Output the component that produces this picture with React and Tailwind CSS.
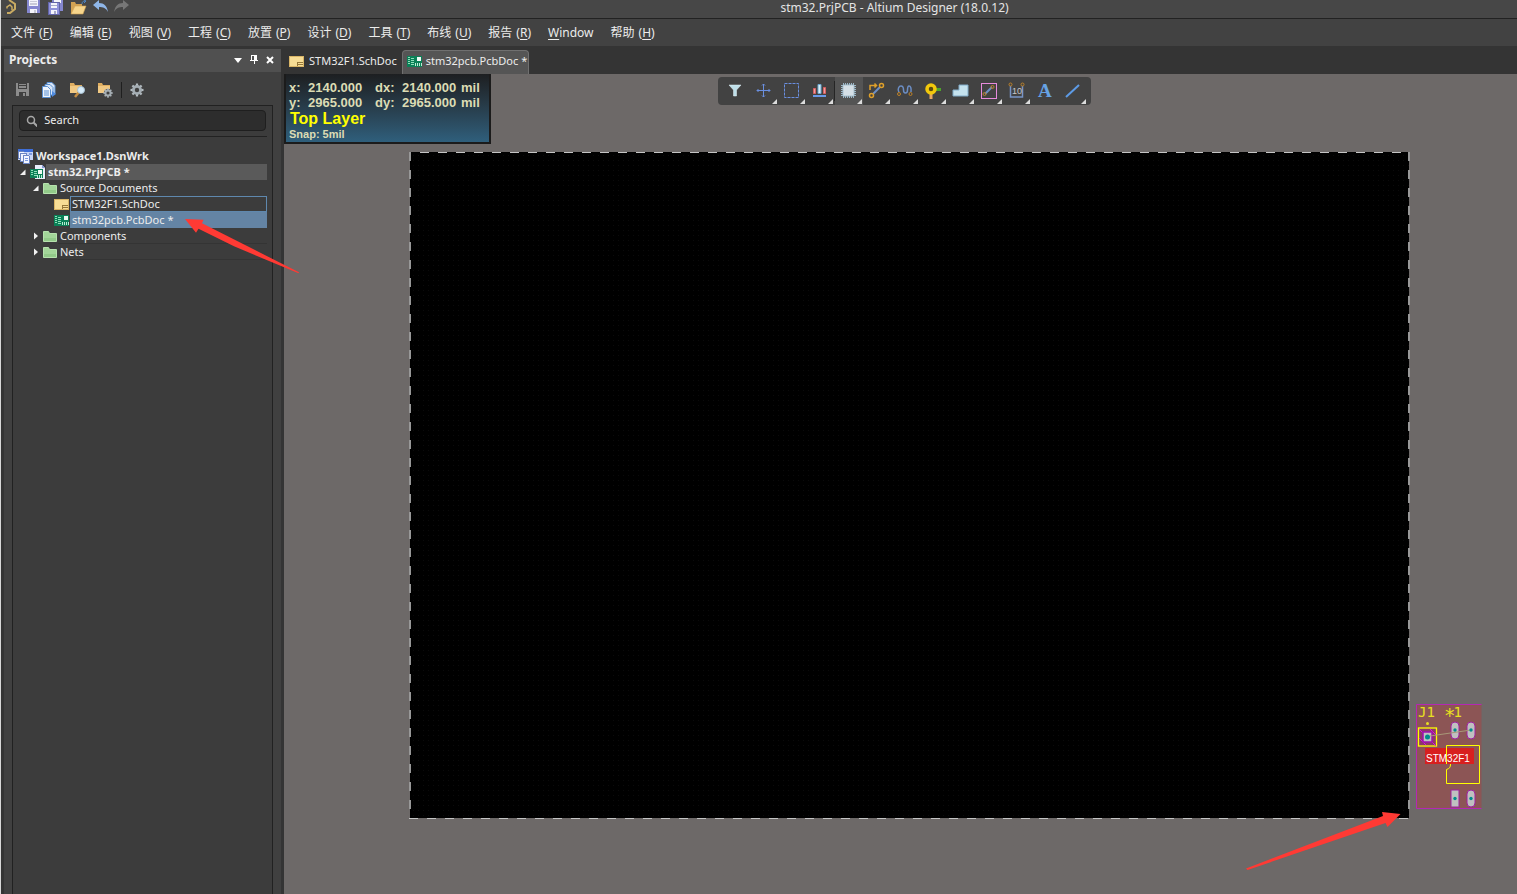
import React from "react";

function SaveIcon({ dim }) {
  const c = dim ? "#8c8c8c" : "#8587cf";
  const p = dim ? "#3f3f3f" : "#f4f4fb";
  return (
    <svg width="13" height="13" viewBox="0 0 13 13" shapeRendering="crispEdges">
      <path d="M0 0h13v13H0z" fill={c} />
      <path d="M2 0h9v6H2z" fill={p} />
      <path d="M3 9h7v4H3z" fill={p} />
      <path d="M3 1h7v1H3zM3 3h7v2H3zM7 10h2v3H7z" fill={dim ? c : "#c9cad8"} />
    </svg>
  );
}

function SaveAllIcon() {
  return (
    <svg width="15" height="15" viewBox="0 0 15 15" shapeRendering="crispEdges">
      <path d="M4 0h11v11H4z" fill="#8587cf" />
      <path d="M6 0h7v3H6z" fill="#f4f4fb" />
      <path d="M0 2h12v13H0z" fill="#6264a8" />
      <path d="M1 3h10v11H1z" fill="#8f91da" />
      <path d="M3 3h6v5H3zM3 10h6v4H3z" fill="#f4f4fb" />
      <path d="M3 5h6v1H3zM6 11h2v3H6z" fill="#a5a7c8" />
    </svg>
  );
}

function OpenIcon() {
  return (
    <svg width="17" height="15" viewBox="0 0 17 15">
      <path d="M1 14V2h4l1 2h6v3" fill="#d2a253" />
      <path d="M1 14 5 6h11l-3 8z" fill="#f6d58c" stroke="#d2a253" strokeWidth=".6" />
      <path d="M12 4c0-2 1-3 3-3m-1-1 2 1-2 2" stroke="#4d86c6" fill="none" />
    </svg>
  );
}

function AltiumLogo() {
  return (
    <svg width="11" height="15" viewBox="0 0 11 15" fill="none" stroke="#c9ab62" strokeWidth="2">
      <path d="M3 0 9 4v5l-5 4H1" />
      <path d="M1 8.500V7l3-2 2 2v3" strokeWidth="1.500" />
    </svg>
  );
}

function UndoIcon({ color, flip }) {
  return (
    <svg width="15" height="12" viewBox="0 0 15 12" className={flip ? "-scale-x-100" : ""}>
      <path d="M0 5 6 0v3c5 0 8 3 9 9-2-4-5-5-9-5v3z" fill={color} />
    </svg>
  );
}

function SchIcon() {
  return (
    <svg width="15" height="11" viewBox="0 0 15 11" shapeRendering="crispEdges" className="shrink-0">
      <path d="M0 0h15v11H0z" fill="#d9b566" />
      <path d="M1 1h13v9H1z" fill="#f7dd95" />
      <path d="M8 6h6v1H8zM9 8h5v1H9zM8 6h1v4H8z" fill="#96783a" />
    </svg>
  );
}

function PcbIcon() {
  return (
    <svg width="15" height="11" viewBox="0 0 15 11" shapeRendering="crispEdges" className="shrink-0">
      <path d="M0 0h15v11H0z" fill="#0b8057" />
      <path d="M1 1h2v1H1zM1 3h2v1H1zM1 5h2v1H1zM1 7h2v1H1zM4 2h3v1H4zM4 4h3v1H4zM4 6h3v1H4zM4 8h3v1H4z" fill="#8fe0bb" />
      <path d="M10 1h4v4h-4z" fill="#eefaf4" />
      <path d="M8 7h1v3H8zM10 7h1v3h-1zM12 7h1v3h-1zM14 7h1v3h-1z" fill="#b9edd4" />
    </svg>
  );
}

function ProjectIcon() {
  return (
    <svg width="15" height="14" viewBox="0 0 15 14" shapeRendering="crispEdges" className="shrink-0">
      <path d="M5 0h7l3 3v11H5z" fill="#e9eefb" />
      <path d="M12 0v3h3z" fill="#8a9bd0" />
      <path d="M0 4h13v9H0z" fill="#0b8057" />
      <path d="M1 5h2v1H1zM1 7h2v1H1zM1 9h2v1H1zM4 6h3v1H4zM4 8h3v1H4zM4 10h3v1H4z" fill="#8fe0bb" />
      <path d="M8 5h4v4H8z" fill="#eefaf4" />
      <path d="M7 10h1v3H7zM9 10h1v3H9zM11 10h1v3h-1z" fill="#b9edd4" />
    </svg>
  );
}

function WorkspaceIcon() {
  return (
    <svg width="15" height="15" viewBox="0 0 15 15" shapeRendering="crispEdges" className="shrink-0">
      <path d="M0 0h15v11H0z" fill="#c7d5f6" />
      <path d="M0 0h15v3H0z" fill="#3f6fd8" />
      <path d="M0 2h6v8H0z" fill="#6d86c4" />
      <path d="M1 3h5v6H1z" fill="#f3f6ff" />
      <path d="M2 4h7v9H2z" fill="#6d86c4" />
      <path d="M3 5h5v7H3z" fill="#f3f6ff" />
      <path d="M5 6h5l2 2v7H5z" fill="#6d86c4" />
      <path d="M6 7h4l1 1v6H6z" fill="#f3f6ff" />
      <path d="M7 9h3v1H7zM7 11h3v1H7z" fill="#7e9be0" />
      <path d="M11 4h3v2h-3z" fill="#7e9be0" />
    </svg>
  );
}

function FolderIcon() {
  return (
    <svg width="14" height="11" viewBox="0 0 14 11" className="shrink-0">
      <path d="M.5 10.500V.5h5l1 2h7v8z" fill="#a3d699" stroke="#b7e2ae" />
      <path d="M1 10h12V7H1z" fill="#92ca89" />
    </svg>
  );
}

function PanelFolder({ children }) {
  return (
    <svg width="17" height="16" viewBox="0 0 17 16">
      <path d="M1 11V1h4l1 2h7v8z" fill="#dfae61" />
      <path d="M1 11V4h12v7z" fill="#f1c983" />
      {children}
    </svg>
  );
}

const gearTeeth = [0, 45, 90, 135, 180, 225, 270, 315];

function Gear({ cx, cy, r }) {
  return (
    <g>
      {gearTeeth.map((a) => (
        <rect key={a} x={cx - r * 0.22} y={cy - r * 1.3} width={r * 0.44} height={r * 0.6} fill="#b4bcc1" transform={`rotate(${a} ${cx} ${cy})`} />
      ))}
      <circle cx={cx} cy={cy} r={r * 0.72} fill="none" stroke="#a4adb3" strokeWidth={r * 0.56} />
    </g>
  );
}

const menus = [
  ["文件", "F"], ["编辑", "E"], ["视图", "V"], ["工程", "C"], ["放置", "P"], ["设计", "D"],
  ["工具", "T"], ["布线", "U"], ["报告", "R"], ["Window", ""], ["帮助", "H"],
];

function TitleBar() {
  return (
    <header className="grid h-[19px] grid-cols-[1fr_auto_1fr] items-center overflow-hidden border-b border-[#222] bg-[#474747]">
      <div className="flex h-4 items-start gap-[7px] self-start pl-[5px]">
        <button aria-label="Altium" className="mr-[3px]"><AltiumLogo /></button>
        <button aria-label="Save"><SaveIcon /></button>
        <button aria-label="Save all" className="ml-px"><SaveAllIcon /></button>
        <button aria-label="Open" className="-mr-px"><OpenIcon /></button>
        <button aria-label="Undo" className="-mr-px"><UndoIcon color="#8fb6e8" /></button>
        <button aria-label="Redo"><UndoIcon color="#777" flip /></button>
      </div>
      <h1 className="pb-1 pl-[271px] text-xs leading-4 text-[#e4e4e4]">stm32.PrjPCB - Altium Designer (18.0.12)</h1>
      <span />
    </header>
  );
}

function MenuBar() {
  return (
    <nav className="flex h-[27px] items-center gap-[17px] bg-[#424242] pl-[10px] text-xs text-[#ececec]">
      {menus.map(([name, key]) => (
        <button key={name} className="flex gap-1 whitespace-nowrap">
          {key ? <><span>{name}</span><span>(<u className="underline-offset-2">{key}</u>)</span></> : <span><u className="underline-offset-2">W</u>indow</span>}
        </button>
      ))}
    </nav>
  );
}

function Caret({ open }) {
  return (
    <svg width="6" height="8" viewBox="0 0 6 8" className="shrink-0">
      <path d={open ? "M5.500 1.500v5.500H0z" : "M1 .5 5 4 1 7.500z"} fill="#f2f2f2" />
    </svg>
  );
}

function TreeRow({ indent, caret, icon, bold, line, label, tone }) {
  return (
    <li className={`flex h-4 items-center ${indent}`}>
      {caret && <button aria-label={`Toggle ${label}`} className="mr-1 shrink-0"><Caret open={caret === "open"} /></button>}
      {icon}
      <span className={`ml-px h-4 flex-1 whitespace-nowrap pl-[2px] leading-[15px] ${bold ? "font-bold" : ""} ${line ? "border-b border-[#343434]" : ""} ${tone || ""}`}>{label}</span>
    </li>
  );
}

function Sidebar() {
  return (
    <aside className="flex w-[277px] shrink-0 flex-col bg-[#404040] text-[11px] text-[#ececec]">
      <div className="flex h-[23px] items-center bg-[#505050] pb-px pl-[5px] pr-[7px]">
        <h2 className="flex-1 text-xs font-bold">Projects</h2>
        <div className="flex items-center gap-2">
          <button aria-label="Panel menu"><svg width="8" height="8"><path d="M0 2h8L4 7z" fill="#fff" /></svg></button>
          <button aria-label="Pin"><svg width="8" height="10" shapeRendering="crispEdges"><path d="M1 0h6v5h1v1H4.500v3h-1V6H0V5h1zM2 1v4h2V1z" fill="#fff" fillRule="evenodd" /></svg></button>
          <button aria-label="Close"><svg width="8" height="8"><path d="m1 1 6 6M7 1 1 7" stroke="#fff" strokeWidth="2" /></svg></button>
        </div>
      </div>
      <div className="flex h-[33px] items-center gap-3 pl-3 pt-[2px]">
        <button aria-label="Save document"><SaveIcon dim /></button>
        <button aria-label="Copy documents" className="ml-px">
          <svg width="14" height="16" viewBox="0 0 14 16">
            <path d="M5 .5h5l3 3V12H5z" fill="#d8e6f8" stroke="#5a8fd0" />
            <path d="M3 2.500h5l3 3V13H3z" fill="#d8e6f8" stroke="#5a8fd0" />
            <path d="M.5 4.500h5l3 3v8h-8z" fill="#edf4fd" stroke="#5a8fd0" />
            <path d="M2 9h5M2 11h5M2 13h5" stroke="#5a8fd0" />
            <path d="m10 9 4 3-4 3z" fill="#4e8be0" />
          </svg>
        </button>
        <button aria-label="Find in project" className="ml-px">
          <PanelFolder><path d="m10 10-4 5" stroke="#c38c41" strokeWidth="2.500" /><circle cx="12" cy="8" r="3.500" fill="#d7ecfa" stroke="#a6bfd0" /></PanelFolder>
        </button>
        <button aria-label="Project options" className="-ml-px">
          <PanelFolder><circle cx="11" cy="11" r="4" fill="#404040" /><Gear cx={11} cy={11} r={3.6} /></PanelFolder>
        </button>
        <span className="-ml-[5px] -mr-1 h-4 w-px bg-[#1f1f1f]" />
        <button aria-label="Settings"><svg width="14" height="14"><Gear cx={7} cy={7} r={5} /></svg></button>
      </div>
      <div className="mx-2 flex-1 border border-b-0 border-[#212121] bg-[#3c3c3c] px-[5px] pt-1">
        <label className="mx-px flex h-[21px] items-center gap-1 rounded border border-[#1f1f1f] bg-[#2d2d2d] pl-[6px]">
          <svg width="12" height="12" fill="none" stroke="#a8a8a8"><circle cx="5" cy="5" r="3.500" strokeWidth="1.500" /><path d="m7.500 7.500 4 4" strokeWidth="2" /></svg>
          <input aria-label="Search" placeholder="Search" className="w-full bg-transparent pl-[3px] placeholder:text-[#ececec] placeholder:opacity-100" />
        </label>
        <hr className="mt-[5px] border-[#222]" />
        <ul className="mt-[11px]">
          <TreeRow indent="pl-0" icon={<WorkspaceIcon />} bold label="Workspace1.DsnWrk" />
          <TreeRow indent="pl-[2px]" caret="open" icon={<ProjectIcon />} bold label="stm32.PrjPCB *" tone="bg-[#5a5a5a]" />
          <TreeRow indent="pl-[15px]" caret="open" icon={<FolderIcon />} label="Source Documents" />
          <TreeRow indent="pl-9" icon={<SchIcon />} label="STM32F1.SchDoc" tone="outline outline-1 -outline-offset-1 outline-[#5f88ae]" />
          <TreeRow indent="pl-9" icon={<PcbIcon />} label="stm32pcb.PcbDoc *" tone="bg-[#6484a4]" />
          <TreeRow indent="pl-[15px]" caret="closed" icon={<FolderIcon />} line label="Components" />
          <TreeRow indent="pl-[15px]" caret="closed" icon={<FolderIcon />} line label="Nets" />
        </ul>
      </div>
    </aside>
  );
}

const chipPins = [3, 5, 7, 9, 11, 13];

const tools = [
  ["Filter", false, <path d="M2 3h12l-4.500 5v6h-3V8z" fill="#bfe0ea" stroke="#e4f5fa" strokeWidth=".5" />],
  ["Snap", true, <path d="M8.500 2v13M2 8.500h13M7 3.500 8.500 2 10 3.500M7 13.500 8.500 15l1.500-1.500M3.500 7 2 8.500 3.500 10M13.500 7 15 8.500 13.500 10" stroke="#6a8fe0" fill="none" />],
  ["Select", true, <rect x="1.500" y="1.500" width="14" height="14" stroke="#6a8fe0" strokeDasharray="3 1" fill="none" />],
  ["Align", true, <g><path d="M2.500 6.500h2v5h-2zM12.500 5.500h2v6h-2z" fill="#e8a0a0" stroke="#d86060" /><path d="M7 2.500h3v9H7z" fill="#d9f0f8" stroke="#6da8d0" /><path d="M2 14h13" stroke="#6a9bea" strokeWidth="2" /></g>],
  ["Component", true, <g><path d="M3 3h11v11H3z" fill="#d5dfe6" stroke="#a9c3d2" />{chipPins.map((p) => <path key={p} d={`M${p + 0.5} 1v2M${p + 0.5} 14v2M1 ${p + 0.5}h2M14 ${p + 0.5}h2`} stroke="#9db9ca" />)}</g>],
  ["Route", true, <g fill="none" stroke="#dfa02a" strokeWidth="1.500"><path d="M5 12 12 5" stroke="#6c8ec4" strokeWidth="2" /><circle cx="3.500" cy="13.500" r="2" /><circle cx="13.500" cy="3.500" r="2" /><path d="M2 8V3.500h6M6.500 1.500l2 2-2 2" /></g>],
  ["Tune", true, <g fill="none"><path d="M3 10.500C1 7 3 4 5 4s2.500 2 2.500 4 1 3 2 3 2-1 2-3 0-4 1.500-4 2.500 2 2 6" stroke="#6c8ec4" strokeWidth="1.500" /><circle cx="3" cy="12" r="1.500" stroke="#bd8128" /><circle cx="14.500" cy="12" r="1.500" stroke="#bd8128" /></g>],
  ["Via", true, <g><path d="M7 8v9" stroke="#e9a75f" strokeWidth="3" /><path d="M9 7.500h8" stroke="#4fa42a" strokeWidth="3" /><circle cx="7" cy="7" r="4" fill="#5a4a10" stroke="#f2c80c" strokeWidth="3.500" /></g>],
  ["Polygon", true, <path d="M1 14V8h6V3h9v11z" fill="#c5e2ee" stroke="#80abc8" />],
  ["Rule", true, <g fill="none"><rect x="1" y="1" width="15" height="15" stroke="#e78bdc" shapeRendering="crispEdges" /><path d="m5 12 7-7" stroke="#6c8ec4" strokeWidth="2" /><circle cx="4.500" cy="12" r="1.500" stroke="#bd8128" /><circle cx="12.500" cy="5" r="1.500" stroke="#bd8128" /></g>],
  ["Dimension", true, <g fill="none"><path d="M2.500 4v11h12V4" stroke="#7895c6" strokeWidth="1.500" /><circle cx="2.500" cy="2.500" r="1.500" stroke="#bd8128" /><circle cx="14.500" cy="2.500" r="1.500" stroke="#bd8128" /><text x="4" y="12" fontSize="9" fill="#c8c8c8" fontFamily="Liberation Sans">10</text></g>],
  ["Text", false, <text x="2" y="15" fontSize="19" fontWeight="bold" fill="#67a3e4" fontFamily="Liberation Serif">A</text>],
  ["Line", true, <path d="M2 15 15 3" stroke="#5d9be6" strokeWidth="2" />],
];

function Toolbar() {
  return (
    <div role="toolbar" className="absolute left-[434px] top-[3px] flex h-7 rounded-sm bg-[#424242] px-1">
      {tools.map(([name, more, art]) => (
        <React.Fragment key={name}>
          {name === "Component" && <span className="my-1 w-px bg-[#252525]" />}
          <button aria-label={name} className={`relative flex h-7 w-7 items-center justify-center pb-px pr-[2px] ${name === "Component" ? "bg-[#545454]" : ""}`}>
            <svg width="17" height="17" viewBox="0 0 17 17" className="overflow-visible">{art}</svg>
            {more && <svg width="5" height="5" className="absolute bottom-px right-px"><path d="M5 0v5H0z" fill="#dcdcdc" /></svg>}
          </button>
        </React.Fragment>
      ))}
    </div>
  );
}

function Hud() {
  return (
    <div className="absolute left-0 top-0 h-[70px] w-[207px] border-2 border-t-0 border-[#1b1b1b] bg-linear-to-b from-[#1d1f21] to-[#2f5f7c] pl-[3px] pt-[6px] font-['Liberation_Sans',sans-serif] text-[13px] font-bold leading-[15px] text-[#dcdcb4]">
      <div className="grid grid-cols-[19px_67px_27px_59px_auto]"><span>x:</span><span>2140.000</span><span>dx:</span><span>2140.000</span><span>mil</span></div>
      <div className="grid grid-cols-[19px_67px_27px_59px_auto]"><span>y:</span><span>2965.000</span><span>dy:</span><span>2965.000</span><span>mil</span></div>
      <p className="pl-px text-base leading-[17px] text-[#ffff00]">Top Layer</p>
      <p className="text-[11px] leading-[14px]">Snap: 5mil</p>
    </div>
  );
}

function Board() {
  return (
    <svg width="1233" height="820" viewBox="284 74 1233 820" className="absolute left-0 top-0" role="img" aria-label="PCB board">
      <defs>
        <pattern id="dots" x="413" y="155" width="5" height="5" patternUnits="userSpaceOnUse"><rect width="1" height="1" fill="#0b0b0b" /></pattern>
      </defs>
      <path d="M410 152h999v666H410z" fill="#000" />
      <path d="M410 152h999v666H410z" fill="url(#dots)" />
      <path d="M420 152.500H1409M409 818.500H1409" fill="none" stroke="#c4c4c4" strokeDasharray="9 9" />
      <path d="M410 152V818M1409 152V818" fill="none" stroke="#989898" strokeWidth="2" strokeDasharray="9 9" />

      <rect x="1416.500" y="704" width="65" height="104.500" fill="#8c5555" />
      <path d="M1481.500 704.500h-65v104h65" fill="none" stroke="#b428b4" />
      <g fill="#e8e020" fontFamily="DejaVu Sans Mono"><text x="1418" y="717" fontSize="14">J1</text><text x="1444" y="717"><tspan fontSize="19" dy="5">*</tspan><tspan fontSize="14" dx="-2" dy="-5">1</tspan></text></g>
      <circle cx="1427.500" cy="723.500" r="1.500" fill="#e8e020" />
      <rect x="1418.500" y="728" width="18" height="18" fill="#8c3a68" stroke="#ffff00" strokeWidth="1.300" />
      <path d="m1419 729 17 17M1430 729l6 6M1419 738l7 7" stroke="#e010e0" />
      <rect x="1423" y="732" width="9" height="10" fill="#c0c0c0" stroke="#a010b0" strokeWidth="1.500" />
      <circle cx="1427.500" cy="737" r="2.500" fill="#008c8c" />
      <g fill="#c0c0c0" stroke="#a020a0">
        <rect x="1451" y="722" width="8" height="17" rx="4" />
        <rect x="1467" y="722" width="8" height="17" rx="4" />
        <rect x="1451" y="790" width="8" height="17" />
        <rect x="1467" y="790" width="8" height="17" rx="4" />
      </g>
      <path d="m1430 736 41-6" stroke="#a89878" fill="none" />
      <g fill="#008c8c"><circle cx="1455" cy="730" r="1.700" /><circle cx="1471" cy="730" r="1.700" /><circle cx="1455" cy="798.500" r="1.700" /><circle cx="1471" cy="798.500" r="1.700" /></g>
      <rect x="1425" y="748" width="49" height="16" fill="#d81f1f" />
      <path d="M1446.500 764v-18.500h33v38h-33V769.500c3-1 4-2 4-5.500" fill="none" stroke="#ffff00" />
      <text x="1426" y="762" fill="#fff" fontFamily="Liberation Sans" fontSize="10">STM32F1</text>

      <path d="m1246 868.500 137-52.500-1-4 18.500 2-13 13-2-4-138 47z" fill="#ff3a34" />
    </svg>
  );
}

function Workspace() {
  return (
    <main className="flex min-w-0 flex-1 flex-col">
      <div role="tablist" className="flex h-[25px] items-end text-[11px] text-[#ececec]">
        <button role="tab" aria-selected="false" className="flex h-6 items-center gap-[5px] pb-px pl-[5px] pr-[5px]"><SchIcon />STM32F1.SchDoc</button>
        <button role="tab" aria-selected="true" className="flex h-6 items-center gap-1 rounded-t border border-b-0 border-[#707070] bg-[#555] pb-[2px] pl-1 pr-px"><PcbIcon />stm32pcb.PcbDoc *</button>
      </div>
      <div className="relative flex-1 overflow-hidden bg-[#6d6968]">
        <Board />
        <Hud />
        <Toolbar />
      </div>
    </main>
  );
}

export default function App() {
  return (
    <div className="relative flex min-h-screen flex-col border-l border-[#d8d8d8] bg-[#343434] font-['Noto_Sans','Noto_Sans_CJK_SC',sans-serif]">
      <TitleBar />
      <MenuBar />
      <div className="flex flex-1 gap-[3px] pl-[3px] pt-[3px]">
        <Sidebar />
        <Workspace />
      </div>
      <svg width="116" height="60" viewBox="184 217 116 60" className="pointer-events-none absolute left-[183px] top-[217px]" aria-hidden="true">
        <path d="m185 219 18.500.7-1.500 3.600 97 49-.5 1-64.500-27-35.500-17.500-2.500 4z" fill="#ff3a34" />
      </svg>
    </div>
  );
}
